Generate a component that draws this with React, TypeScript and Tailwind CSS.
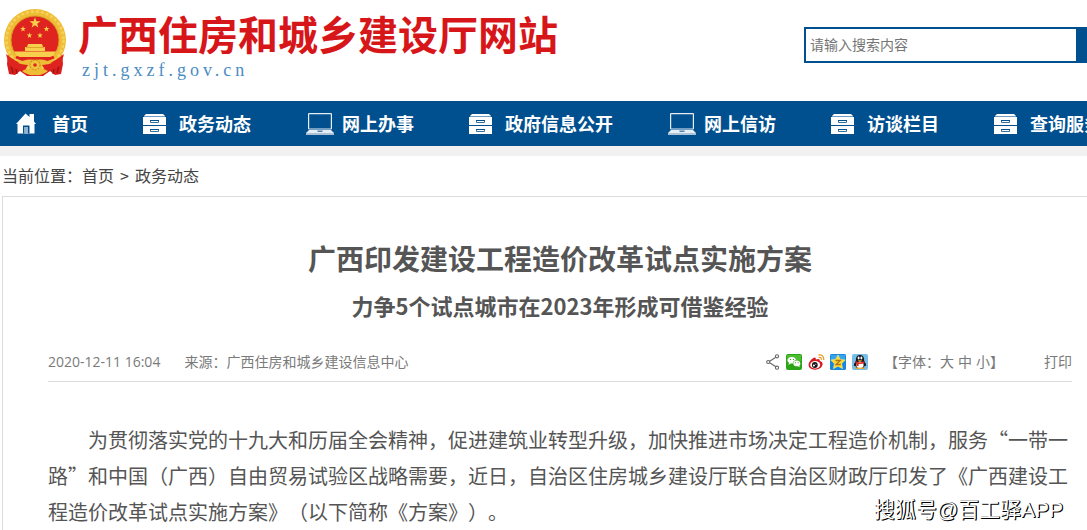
import type { ReactNode } from "react"

const HomeIcon = () => (
    <svg width="20" height="21" viewBox="0 0 20 21" fill="#fff">
        <path d="M0 11 L9.5 0.5 L13.5 4 V1 H18 V8.5 L20 11 H18.5 V20.5 H1.5 V11 Z" />
        <path d="M7 20.5 V12.5 H13.5 V20.5 H12 V14 H8.5 V20.5 Z" fill="#00508f" />
        <path d="M8.5 14 H12 V20.5 H8.5 Z" fill="#8fb3d2" />
    </svg>
)

const CabinetIcon = () => (
    <svg width="23" height="20" viewBox="0 0 23 20">
        <path d="M3 0 H20 L22 2 H1 Z" fill="#fff" />
        <path d="M0 3 H23 V11 H0 Z M0 12 H23 V20 H0 Z" fill="#fff" />
        <path d="M1 2.5 H22" stroke="#6d9ac1" strokeWidth="1" />
        <path d="M7.5 6.5 H15.5 V8.5 H7.5 Z M7.5 15.5 H15.5 V17.5 H7.5 Z" fill="#fff" stroke="#33719f" strokeWidth="1" />
        <path d="M7 6.5 H16 M7 15.5 H16" stroke="#00508f" strokeWidth="1" />
    </svg>
)

const LaptopIcon = () => (
    <svg width="28" height="22" viewBox="0 0 28 22">
        <rect x="2.6" y="0.6" width="22.8" height="15.4" rx="0.5" fill="none" stroke="#e6eef5" strokeWidth="1.2" />
        <path d="M3 17 H25 L28 20 H0 Z" fill="#e6eef5" />
        <path d="M0 20 H28 V22 H0 Z" fill="#a9c2d8" />
        <path d="M11.5 17.5 H16.5 V19 H11.5 Z" fill="#4f83b0" />
    </svg>
)

const STAR = "M0 -5 L1.2 -1.6 L4.8 -1.5 L1.9 0.6 L2.9 4 L0 2 L-2.9 4 L-1.9 0.6 L-4.8 -1.5 L-1.2 -1.6 Z"

const Emblem = () => (
    <svg width="62" height="69" viewBox="0 0 62 69">
        <path d="M4 46 L3 56 L5 66 L11 67 L16 63 L23 68 H39 L46 63 L51 67 L57 66 L59 56 L58 46 Z" fill="#d81e1c" />
        <path d="M6 53 L9 65 M11 55 L13 66 M56 53 L53 65 M51 55 L49 66" stroke="#9d1414" strokeWidth="1.3" />
        <circle cx="31" cy="32" r="31" fill="#efbd35" />
        <circle cx="31" cy="32" r="28.5" fill="none" stroke="#f6d25c" strokeWidth="2.5" strokeDasharray="3 2" />
        <circle cx="31" cy="32" r="24" fill="#df2420" stroke="#d79a22" strokeWidth="1" />
        <g fill="#f8cf4c">
            <path d={STAR} transform="translate(31 15) scale(1.15)" />
            <path d={STAR} transform="translate(19 21) scale(0.6)" />
            <path d={STAR} transform="translate(42.5 21) scale(0.6)" />
            <path d={STAR} transform="translate(25.5 27.5) scale(0.6)" />
            <path d={STAR} transform="translate(36 27.5) scale(0.6)" />
            <path d="M24 36 H38 L39 39 H41 V43 H21 V39 H23 Z" />
            <path d="M10 43.5 H52 L49 49 H13 Z" />
        </g>
        <path d="M22 39.5 H40" stroke="#d79a22" strokeWidth="0.8" />
        <path d="M12 49 Q22 54 31 51 Q40 54 50 49" fill="none" stroke="#df2420" strokeWidth="3" />
        <path d="M2 46 Q14 56 24 57 L21 62 Q12 63 5 57 Z M60 46 Q48 56 38 57 L41 62 Q50 63 57 57 Z" fill="#df2420" />
        <path d="M14 55 Q22 50 31 52 Q40 50 48 55 Q40 58 31 55 Q22 58 14 55 Z" fill="#efbd35" />
        <circle cx="31" cy="57" r="5" fill="#f2c53f" stroke="#d79a22" strokeWidth="1.5" strokeDasharray="2 1" />
        <circle cx="31" cy="57" r="1.8" fill="#df2420" />
        <path d="M18 63 Q24 59 31 63 Q38 59 44 63 Q38 68 31 67 Q24 68 18 63 Z" fill="#efbd35" />
    </svg>
)

const ShareIcon = () => (
    <svg width="14" height="16" viewBox="0 0 14 16" fill="#fff" stroke="#666" strokeWidth="1.1">
        <path d="M11 2.5 L2.5 8 L11 13.5" fill="none" />
        <circle cx="2.2" cy="8" r="1.5" />
        <circle cx="11" cy="2.3" r="1.6" />
        <circle cx="11" cy="13.7" r="1.6" />
    </svg>
)

const WechatIcon = () => (
    <svg width="16" height="16" viewBox="0 0 16 16">
        <rect width="16" height="16" rx="2" fill="#2ba515" />
        <path d="M1 1 H15 V7 Q8 5 1 8 Z" fill="#4fbd33" />
        <path d="M2.5 11 L3 8.8 Q1 7.3 1.6 5.4 Q2.5 3 5.8 3 Q9.3 3 10 6 Q7 6.5 6.8 9.5 L4.6 9.6 Z" fill="#fff" />
        <path d="M7.3 9.4 Q7.5 6.6 10.7 6.6 Q14.2 6.8 14.4 9.4 Q14.4 10.7 13.4 11.6 L13.7 13.2 L12 12.3 Q7.6 12.8 7.3 9.4 Z" fill="#fff" />
        <path d="M4 5 H5 V6 H4 Z M7 5 H8 V6 H7 Z M9 8.3 H10 V9.2 H9 Z M11.7 8.3 H12.7 V9.2 H11.7 Z" fill="#2ba515" />
    </svg>
)

const WeiboIcon = () => (
    <svg width="17" height="16" viewBox="0 0 17 16">
        <path d="M0.5 10.5 Q1 7 5.3 4 Q8.3 2.5 7.8 5.5 Q12.2 3.8 11.8 7 Q15 8 14.6 10.6 Q13.3 15.7 7 15.8 Q0.6 15.3 0.5 10.5 Z" fill="#d71920" />
        <ellipse cx="7.2" cy="10.8" rx="5" ry="3.7" fill="#fff" />
        <circle cx="6.8" cy="11" r="2.9" fill="#161616" />
        <circle cx="5.9" cy="11.6" r="1" fill="#fff" />
        <circle cx="7.8" cy="10.2" r="0.5" fill="#fff" />
        <path d="M10.5 1 Q15.8 0.3 15.8 6 M10.6 3.4 Q13.5 3 13.4 5.8" fill="none" stroke="#f29a1f" strokeWidth="1.3" />
    </svg>
)

const QzoneIcon = () => (
    <svg width="16" height="16" viewBox="0 0 16 16">
        <rect width="16" height="16" rx="1.5" fill="#1687dc" />
        <path d="M1 1 H15 V6 H1 Z" fill="#35a4ee" />
        <path d="M8 0.8 L10.2 5.3 L15.3 6 L11.7 9.5 L12.6 14.7 L8 12.3 L3.4 14.7 L4.3 9.5 L0.7 6 L5.8 5.3 Z" fill="#fdd835" stroke="#fbe88a" strokeWidth="0.5" />
        <path d="M5.5 6.5 H10.3 L6 10.5 H10.8" fill="none" stroke="#b07612" strokeWidth="1.3" />
    </svg>
)

const QQIcon = () => (
    <svg width="16" height="16" viewBox="0 0 16 16">
        <rect width="16" height="16" rx="2" fill="#76bdea" />
        <path d="M8 1 Q12 1 12 5.5 L12.4 7.5 Q14.5 10 14 12 L12.7 11.7 L11.5 14 H4.5 L3.3 11.7 L2 12 Q1.5 10 3.6 7.5 L4 5.5 Q4 1 8 1 Z" fill="#151515" />
        <ellipse cx="8" cy="11" rx="3.6" ry="3.4" fill="#fff" />
        <ellipse cx="6.6" cy="4" rx="1" ry="1.4" fill="#fff" />
        <ellipse cx="9.4" cy="4" rx="1" ry="1.4" fill="#fff" />
        <path d="M5.3 6.2 H10.7 L8 7.4 Z" fill="#f5a21b" />
        <path d="M3.6 7.3 Q8 9.5 12.4 7.3 L12.4 9 Q9 10.3 6.6 9.8 V12 H4.8 V9.4 L3.5 9 Z" fill="#e3261b" />
        <path d="M3.5 13.5 H7.5 V15 H3.5 Z M8.5 13.5 H12.5 V15 H8.5 Z" fill="#f5a21b" />
    </svg>
)

const navItems: { label: string; icon: ReactNode }[] = [
    { label: "首页", icon: <HomeIcon /> },
    { label: "政务动态", icon: <CabinetIcon /> },
    { label: "网上办事", icon: <LaptopIcon /> },
    { label: "政府信息公开", icon: <CabinetIcon /> },
    { label: "网上信访", icon: <LaptopIcon /> },
    { label: "访谈栏目", icon: <CabinetIcon /> },
    { label: "查询服务", icon: <CabinetIcon /> },
]

const shareItems = [
    { name: "分享", icon: <ShareIcon /> },
    { name: "微信", icon: <WechatIcon /> },
    { name: "微博", icon: <WeiboIcon /> },
    { name: "QQ空间", icon: <QzoneIcon /> },
    { name: "QQ", icon: <QQIcon /> },
]

const Header = () => (
    <header className="flex justify-between items-start h-[101px]">
        <a href="#" className="flex gap-3 pl-1 pt-2">
            <Emblem />
            <span className="flex flex-col">
                <span className="text-[40px] leading-[50px] font-bold text-[#d7161a] whitespace-nowrap">广西住房和城乡建设厅网站</span>
                <span className="pl-1 text-lg leading-6 tracking-[4px] text-[#4a8cc4] font-['Liberation_Serif',serif]">zjt.gxzf.gov.cn</span>
            </span>
        </a>
        <form className="flex mt-[27px] h-9 w-[283px]">
            <input
                type="text"
                aria-label="请输入搜索内容"
                placeholder="请输入搜索内容"
                className="grow min-w-0 border-2 border-r-0 border-[#00508f] px-1 pb-[2px] text-sm placeholder:text-[#757575] outline-none"
            />
            <button type="button" aria-label="搜索" className="w-[11px] bg-[#00508f]" />
        </form>
    </header>
)

const Nav = () => (
    <nav className="flex items-center gap-[55px] h-[45px] pl-4 bg-[#00508f] overflow-hidden">
        {navItems.map(({ label, icon }) => (
            <a key={label} href="#" className="flex items-center shrink-0 text-lg leading-[45px] font-bold text-white whitespace-nowrap">
                <span className="w-9">{icon}</span>
                {label}
            </a>
        ))}
    </nav>
)

const Article = () => (
    <article className="ml-[2px] border-t border-l border-[#dcdcdc] pl-[45px] pr-[15px] pb-1 text-[#555]">
        <h1 className="pt-10 text-center text-[28px] leading-[42px] font-bold">广西印发建设工程造价改革试点实施方案</h1>
        <h2 className="pt-2 text-center text-[22px] leading-9 font-bold">力争5个试点城市在2023年形成可借鉴经验</h2>
        <div className="flex items-center mt-5 h-[39px] border-b border-[#dcdcdc] text-sm text-[#7a7a7a] font-['Open_Sans','Noto_Sans_CJK_SC',sans-serif]">
            <time>2020-12-11 16:04</time>
            <span className="ml-6">来源：广西住房和城乡建设信息中心</span>
            <div className="ml-auto flex items-center gap-[6px]">
                {shareItems.map(({ name, icon }) => (
                    <a key={name} href="#" aria-label={name} className="w-4 first:w-[14px]">{icon}</a>
                ))}
            </div>
            <div className="ml-4 flex gap-1">
                <span>【字体：<button type="button">大</button></span>
                <button type="button">中</button>
                <span><button type="button">小</button>】</span>
            </div>
            <button type="button" className="ml-10">打印</button>
        </div>
        <p className="pt-10 indent-[2em] text-xl leading-9">
            为贯彻落实党的十九大和历届全会精神，促进建筑业转型升级，加快推进市场决定工程造价机制，服务“一带一路”和中国（广西）自由贸易试验区战略需要，近日，自治区住房城乡建设厅联合自治区财政厅印发了《广西建设工程造价改革试点实施方案》（以下简称《方案》）。
        </p>
    </article>
)

export default function App() {
    return (
        <div lang="zh-CN" className="relative bg-white overflow-hidden font-['Noto_Sans_CJK_SC',sans-serif] [text-spacing-trim:space-all]">
            <Header />
            <Nav />
            <div className="h-[10px] bg-[#f1f1f1]" />
            <div className="flex h-10 pl-[2px] text-base leading-[38px] text-[#444]">
                <span>当前位置：</span>
                <a href="#">首页</a>
                <span className="px-[6px]">&gt;</span>
                <a href="#">政务动态</a>
            </div>
            <Article />
            <span className="absolute right-6 bottom-2 text-[21px] leading-8 text-white [text-shadow:1px_1px_0_#000,1px_0_0_#000] font-['Liberation_Sans','Noto_Sans_CJK_SC',sans-serif]">搜狐号@百工驿APP</span>
        </div>
    )
}
